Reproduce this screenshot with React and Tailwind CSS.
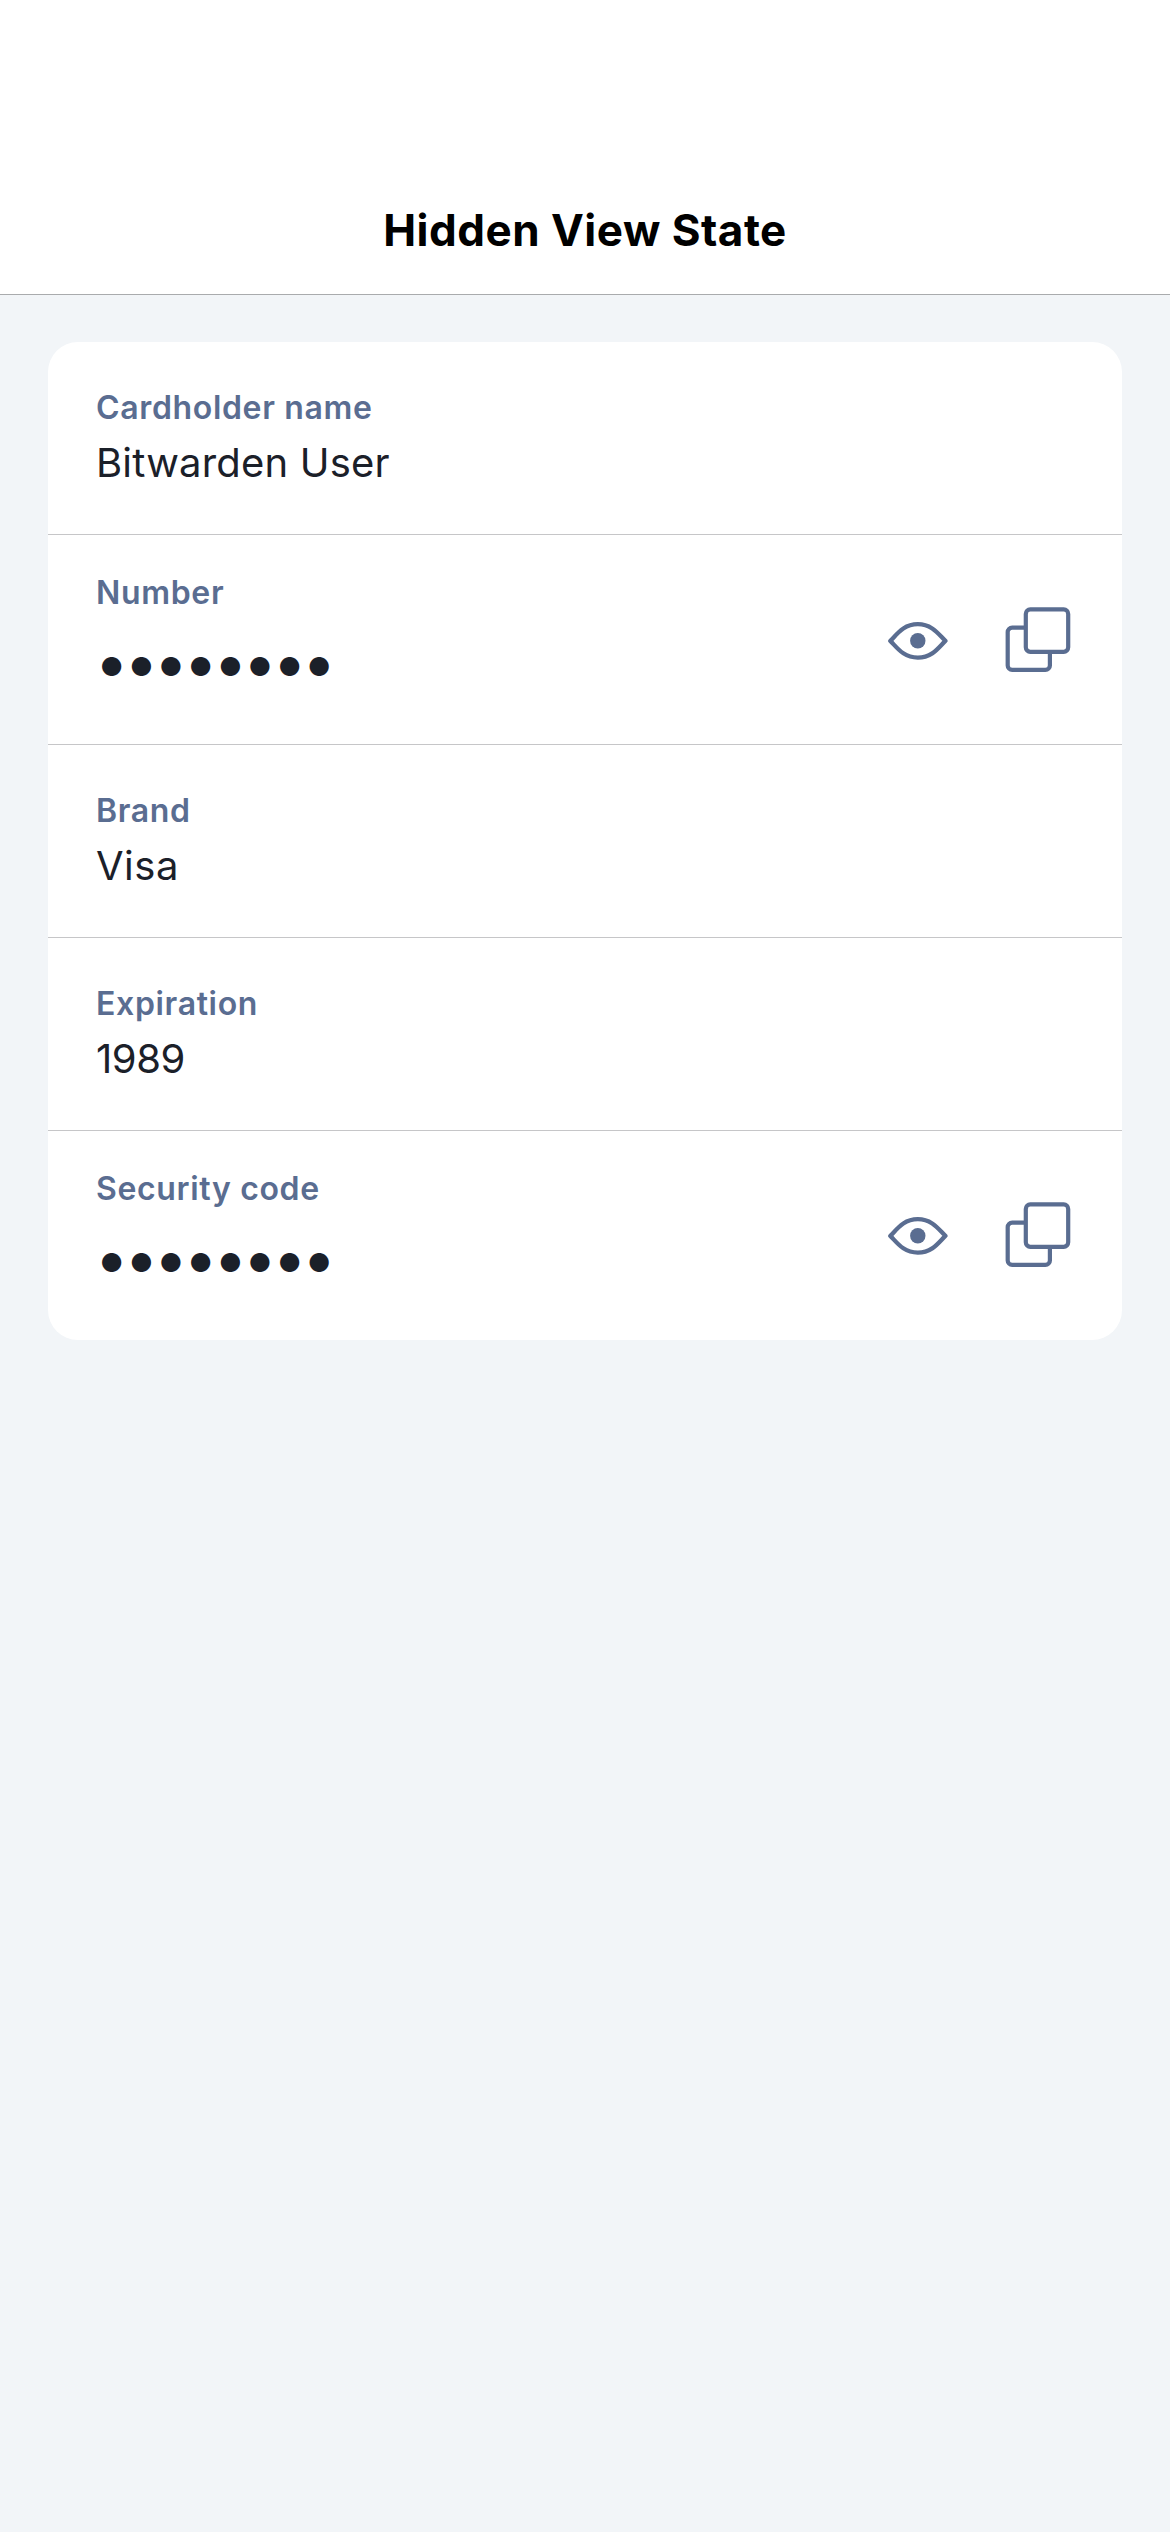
const FIELDS = [
  { label: "Cardholder name", value: "Bitwarden User", tracking: "tracking-[0.2px]" },
  { label: "Number", hidden: true },
  { label: "Brand", value: "Visa", tracking: "tracking-[0.5px]" },
  { label: "Expiration", value: "1989", tracking: "tracking-[-0.4px]" },
  { label: "Security code", hidden: true, last: true },
];

function EyeIcon() {
  return (
    <svg width="60" height="38" viewBox="0 0 60 38" fill="none">
      <path
        d="M2.3 18.9C8.5 13 15 2.2 29.8 2.2S51.1 13 57.4 18.9C51.1 24.8 44.6 35.6 29.8 35.6S8.5 24.8 2.3 18.9Z"
        stroke="currentColor"
        strokeWidth="4.3"
        strokeLinejoin="round"
      />
      <circle cx="29.8" cy="18.8" r="7.7" fill="currentColor" />
    </svg>
  );
}

function CopyIcon() {
  return (
    <svg width="66" height="66" viewBox="0 0 66 66" fill="none" stroke="currentColor" strokeWidth="4.2">
      <path d="M20.8 20.6H7.2a4.5 4.5 0 0 0-4.5 4.5V58.4a4.5 4.5 0 0 0 4.5 4.5H40.4a4.5 4.5 0 0 0 4.5-4.5V44.8" />
      <rect x="20.8" y="2.4" width="42.4" height="42.4" rx="4.5" />
    </svg>
  );
}

function Field({ label, value, hidden, last, tracking }) {
  return (
    <div
      className={`flex justify-between pl-12 ${last ? "" : "border-b border-[#c6c6c8]"} ${
        hidden ? (last ? "h-[209px]" : "h-[210px]") : "h-[193px]"
      }`}
    >
      <div className={hidden ? "pt-[38px]" : "pt-[46px]"}>
        <div className="text-[32px] leading-[39px] font-semibold tracking-[0.66px] text-[#5a6d91]">{label}</div>
        {hidden ? (
          <div className="mt-[39px] pl-1 text-[25.5px] leading-8 tracking-[6.35px] text-[#1b2029]">●●●●●●●●</div>
        ) : (
          <div className={`mt-[11px] text-[40px] leading-[49px] text-[#1b2029] ${tracking}`}>{value}</div>
        )}
      </div>
      {hidden && (
        <div className={`flex items-start gap-[57px] pr-[51px] text-[#5a6d91] ${last ? "pt-[71px]" : "pt-[72px]"}`}>
          <button type="button" aria-label="Show" className="mt-[15px]">
            <EyeIcon />
          </button>
          <button type="button" aria-label="Copy">
            <CopyIcon />
          </button>
        </div>
      )}
    </div>
  );
}

export default function App() {
  return (
    <div className="min-h-[2532px] w-[1170px] bg-[#f2f5f8] font-['Inter',sans-serif]">
      <header className="h-[295px] border-b border-[#a9abad] bg-white pt-[203px] text-center">
        <h1 className="text-[44px] leading-[54px] font-bold tracking-[0.5px] text-black">Hidden View State</h1>
      </header>
      <main className="px-12 pt-[47px]">
        <section className="overflow-hidden rounded-[30px] bg-white">
          {FIELDS.map((field) => (
            <Field key={field.label} {...field} />
          ))}
        </section>
      </main>
    </div>
  );
}
